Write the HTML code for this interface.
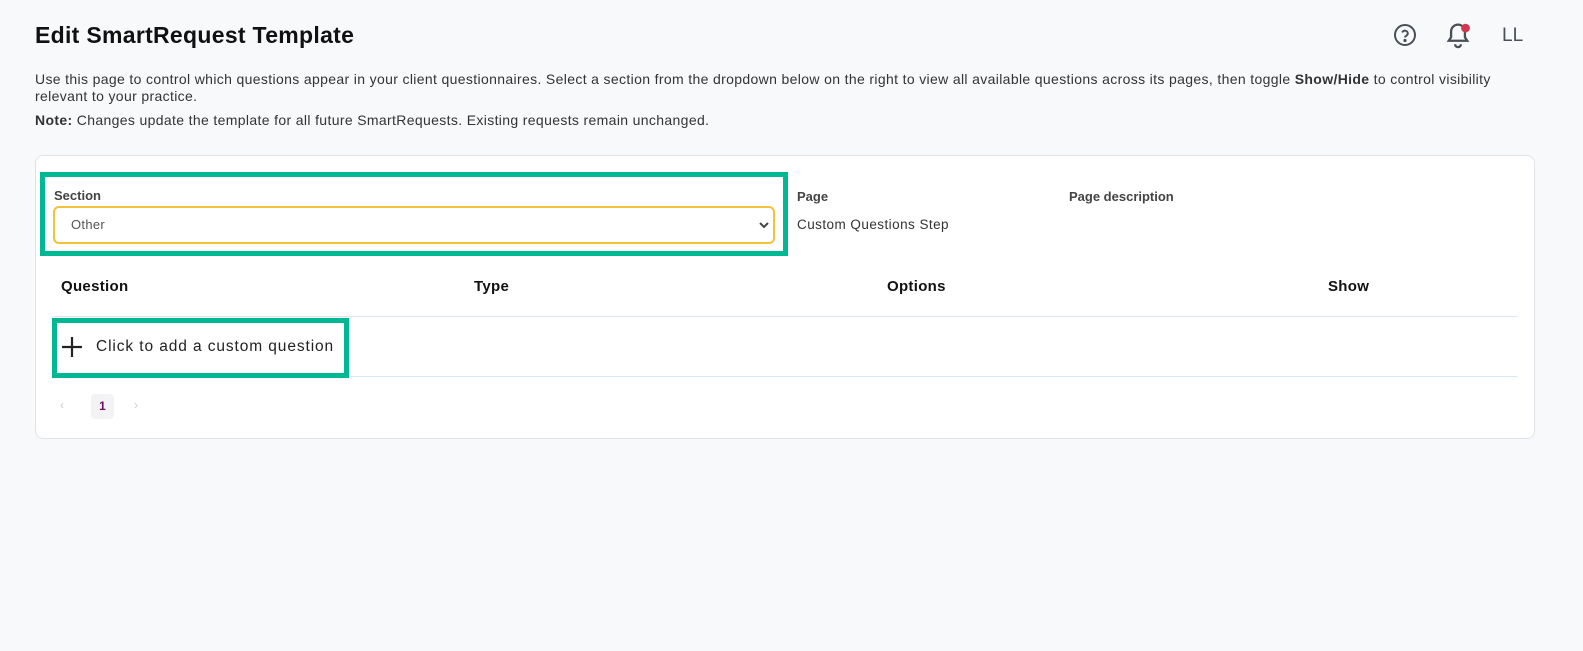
<!DOCTYPE html>
<html><head><meta charset="utf-8"><style>
*{box-sizing:border-box;margin:0;padding:0}
body{width:1583px;height:651px;background:#f8f9fb;font-family:"Liberation Sans",sans-serif;color:#222;position:relative;overflow:hidden}
.abs{position:absolute}
h1{position:absolute;left:35px;top:22px;font-size:23px;font-weight:bold;color:#111;letter-spacing:0.3px}
.p{font-size:14px;color:#333;line-height:17px;letter-spacing:0.35px}
.card{left:35px;top:155px;width:1500px;height:284px;background:#fff;border:1px solid #dfe2e6;border-radius:8px}
.lbl{font-size:13px;font-weight:bold;color:#444}
.th{font-size:15px;font-weight:bold;color:#111;letter-spacing:0.3px}
</style></head><body>
<h1>Edit SmartRequest Template</h1>
<svg class="abs" style="left:1393px;top:23px" width="24" height="24" viewBox="0 0 24 24" fill="none" stroke="#4a4f57" stroke-width="2"><circle cx="12" cy="12" r="10"/><path d="M9.2 9.5a2.9 2.9 0 0 1 5.6 1c0 2-2.8 2.4-2.8 4"/><circle cx="12" cy="17.5" r="0.6" fill="#4a4f57"/></svg>
<svg class="abs" style="left:1443px;top:20px" width="30" height="30" viewBox="0 0 26 26" fill="none" stroke="#4a4f57" stroke-width="2"><path d="M5 18h16l-2-3v-5a6 6 0 0 0-12 0v5z"/><path d="M10.5 21a2.5 2.5 0 0 0 5 0"/><circle cx="19.5" cy="7" r="3.8" fill="#d1384f" stroke="none"/></svg>
<div class="abs" style="left:1502px;top:25px;font-size:19px;color:#4a4f57">LL</div>
<div class="abs p" style="left:35px;top:71px;width:1500px">Use this page to control which questions appear in your client questionnaires. Select a section from the dropdown below on the right to view all available questions across its pages, then toggle <b>Show/Hide</b> to control visibility relevant to your practice.</div>
<div class="abs p" style="left:35px;top:112px"><b>Note:</b> Changes update the template for all future SmartRequests. Existing requests remain unchanged.</div>
<div class="abs card"></div>
<div class="abs" style="left:40px;top:172px;width:748px;height:84px;border:5px solid #00b894"></div>
<div class="abs lbl" style="left:54px;top:188px">Section</div>
<div class="abs" style="left:53px;top:206px;width:722px;height:38px;border:2px solid #f3c13a;border-radius:6px;background:#fff"></div>
<div class="abs" style="left:71px;top:217px;font-size:13px;color:#555;letter-spacing:0.3px">Other</div>
<svg class="abs" style="left:758px;top:220px" width="12" height="10" viewBox="0 0 12 10"><path d="M2 3l4 4 4-4" fill="none" stroke="#444" stroke-width="2"/></svg>
<div class="abs lbl" style="left:797px;top:189px">Page</div>
<div class="abs" style="left:797px;top:217px;font-size:13.5px;color:#333;letter-spacing:0.45px">Custom Questions Step</div>
<div class="abs lbl" style="left:1069px;top:189px">Page description</div>
<div class="abs th" style="left:61px;top:278px">Question</div>
<div class="abs th" style="left:474px;top:278px">Type</div>
<div class="abs th" style="left:887px;top:278px">Options</div>
<div class="abs th" style="left:1328px;top:278px">Show</div>
<div class="abs" style="left:53px;top:316px;width:1464px;height:1px;background:#d6e6f2"></div>
<div class="abs" style="left:53px;top:376px;width:1464px;height:1px;background:#d6e6f2"></div>
<div class="abs" style="left:52px;top:318px;width:297px;height:60px;border:5px solid #00b894;background:#fff"></div>
<svg class="abs" style="left:61px;top:336px" width="22" height="22" viewBox="0 0 22 22"><path d="M11 1v20M1 11h20" stroke="#222" stroke-width="2.2"/></svg>
<div class="abs" style="left:96px;top:338px;font-size:15.5px;color:#222;letter-spacing:0.9px">Click to add a custom question</div>
<div class="abs" style="left:60px;top:398px;font-size:12px;color:#ccc">&#8249;</div>
<div class="abs" style="left:91px;top:394px;width:23px;height:25px;background:#f3f3f5;border-radius:4px;font-size:12px;font-weight:bold;color:#6a1060;text-align:center;line-height:25px">1</div>
<div class="abs" style="left:134px;top:398px;font-size:12px;color:#ccc">&#8250;</div>
</body></html>
